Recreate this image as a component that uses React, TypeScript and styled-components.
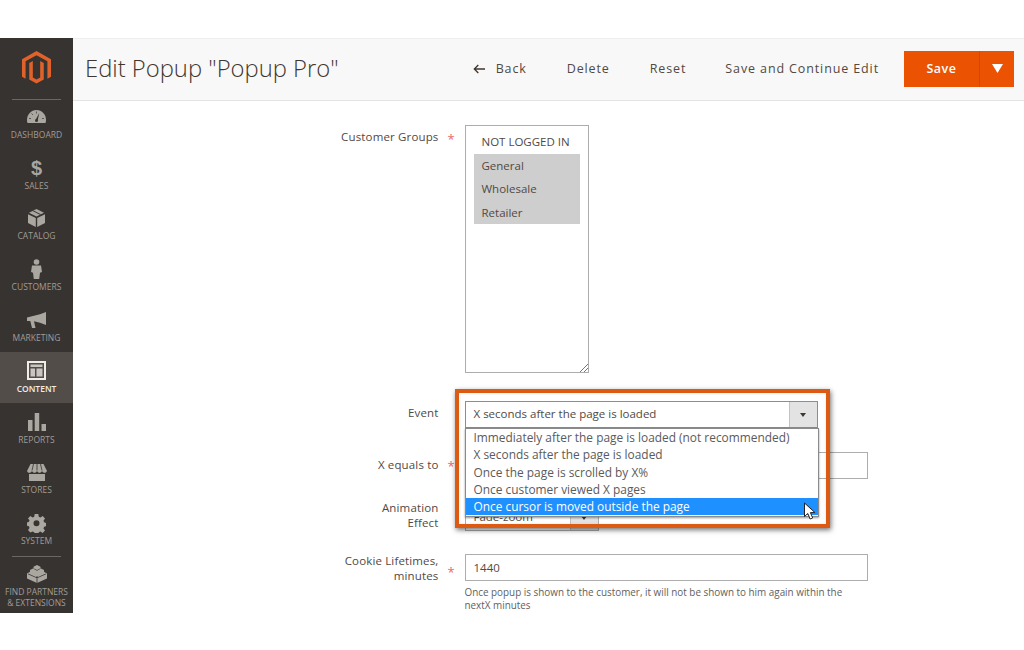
import React from "react";
import styled, { createGlobalStyle } from "styled-components";

const GlobalStyle = createGlobalStyle`
  html, body { margin: 0; padding: 0; background: #fff; }
  body { font-family: "Open Sans", "Noto Sans", sans-serif; color: #41362f; overflow: hidden; }
  * { box-sizing: border-box; }
`;

const NAV = [
  { key: "dashboard", label: "Dashboard" },
  { key: "sales", label: "Sales" },
  { key: "catalog", label: "Catalog" },
  { key: "customers", label: "Customers" },
  { key: "marketing", label: "Marketing" },
  { key: "content", label: "Content", active: true },
  { key: "reports", label: "Reports" },
  { key: "stores", label: "Stores" },
  { key: "system", label: "System" },
];

const OPTIONS = [
  "Immediately after the page is loaded (not recommended)",
  "X seconds after the page is loaded",
  "Once the page is scrolled by X%",
  "Once customer viewed X pages",
  "Once cursor is moved outside the page",
];

function NavIcon({ name }: { name: string }) {
  const c = "#aaa6a0";
  const bg = "#373330";
  switch (name) {
    case "dashboard":
      return (
        <svg width="19" height="13" viewBox="0 0 19 13">
          <path fill={c} d="M9.500 0C4 0 0 4.500 0 10c0 1 .2 2 .5 3h18c.3-1 .5-2 .5-3 0-5.500-4-10-9.500-10z" />
          <path fill={bg} d="M8.500 10 12.300 3l-1.700 7.800z" />
          <circle cx="9.500" cy="10.500" r="1.500" fill={bg} />
          <path stroke={bg} strokeWidth=".7" d="M9.500 1.500v2M4.500 3.500 6 5M2 8.500h2M15 8.500h2" />
        </svg>
      );
    case "sales":
      return <Dollar>$</Dollar>;
    case "catalog":
      return (
        <svg width="17" height="18" viewBox="0 0 17 18">
          <path fill={c} d="M8.500 0 16 3.700 8.500 7.500 1 3.700z" />
          <path fill={c} d="M0 5.200 7.800 9v9L0 14zM17 5.200 9.200 9v9l7.800-4z" />
          <path fill={bg} d="M4.500 2 12 5.800l1-.5L5.500 1.500z" />
        </svg>
      );
    case "customers":
      return (
        <svg width="11" height="20" viewBox="0 0 11 20">
          <circle cx="5.500" cy="3" r="2.800" fill={c} />
          <path fill={c} d="M1 6.500h9l1 6.500-2 .8-.8 6.200H2.800L2 13.800 0 13z" />
        </svg>
      );
    case "marketing":
      return (
        <svg width="20" height="16" viewBox="0 0 20 16">
          <path fill={c} d="M0 5.500 13 2.200 19 0v13l-6-2.200-6-1.500L8.500 16H5L3.300 9H0z" />
        </svg>
      );
    case "content":
      return (
        <svg width="19" height="19" viewBox="0 0 19 19">
          <path fill="#f0ece6" fillRule="evenodd" d="M0 0h19v19H0zM2 2v15h15V2z" />
          <path fill="#c9c5bf" d="M3.500 3.500h12v2.500h-12zM3.500 7.500h4.500v8h-4.500zM9.500 7.500h6v8h-6z" />
        </svg>
      );
    case "reports":
      return (
        <svg width="18" height="18" viewBox="0 0 18 18">
          <path fill={c} d="M0 7h4.500v11H0zM6.700 0h4.500v18H6.700zM13.500 11H18v7h-4.500z" />
        </svg>
      );
    case "stores":
      return (
        <svg width="20" height="17" viewBox="0 0 20 17">
          <path fill={c} d="M3.500 0h13L20 7c-.4 1.300-1.600 1.800-2.500 1.800S15.500 8.200 15 7c-.5 1.200-1.500 1.800-2.500 1.800S10.500 8.200 10 7c-.5 1.200-1.500 1.800-2.500 1.800S5.500 8.200 5 7c-.5 1.200-1.500 1.800-2.500 1.800S.4 8.300 0 7z" />
          <path stroke={bg} strokeWidth=".8" fill="none" d="M6.500 0 5 6.500M10 0v6.500M13.500 0 15 6.500" />
          <path fill={c} d="M2 10h16v7H2z" />
        </svg>
      );
    case "system":
      return (
        <svg width="19" height="19" viewBox="0 0 19 19">
          <path
            fill={c}
            fillRule="evenodd"
            d="M7.700 0h3.600l.5 2.700 1.600.7L15.700 2l2.300 2.500-1.500 2.200.6 1.600 1.900.6v3.300l-1.900.6-.6 1.600 1.500 2.200-2.300 2.400-2.300-1.500-1.600.7-.5 2.100H7.700l-.5-2.100-1.600-.7L3.300 18.500 1 16.100l1.500-2.200-.6-1.600L0 11.700V8.400l1.900-.6.600-1.600L1 4.500 3.300 2l2.300 1.400 1.600-.7zM9.500 6.300a3 3 0 1 0 0 6 3 3 0 0 0 0-6z"
          />
        </svg>
      );
    default:
      return null;
  }
}

export default function App() {
  return (
    <>
      <GlobalStyle />
      <Frame>
        <Sidebar>
          <LogoBox>
            <svg width="29" height="33" viewBox="0 0 30 35" preserveAspectRatio="none">
              <path fill="#e0622a" d="M15 0 30 8.700v18.600l-3.700 2.100V11L15 4.500 3.700 11v18.400L0 27.300V8.700z" />
              <path fill="#e0622a" d="M7.500 12.800l3.700-2.100V28l3.800 2.200 3.800-2.200V10.700l3.700 2.100v17.500L15 34.600l-7.500-4.300z" />
            </svg>
          </LogoBox>
          <NavList>
            {NAV.map((item) => (
              <NavItem key={item.key} $active={item.active}>
                <IconSlot>
                  <NavIcon name={item.key} />
                </IconSlot>
                <NavLabel $active={item.active}>{item.label}</NavLabel>
              </NavItem>
            ))}
          </NavList>
          <NavDivider />
          <PartnerItem>
            <svg width="20" height="18" viewBox="0 0 20 18">
              <path fill="#aaa6a0" d="M10 0l3.500 1.700v1.500L17 5v1.800L20 8.500v5L10 18 0 13.500v-5l3-1.700V5l3.500-1.800V1.700z" />
              <path fill="#373330" d="M9.600 11h.8v7h-.8zM1 8.500l9 4 9-4v.8l-9 4-9-4zM6.500 3.200 10 5l3.500-1.800v.6L10 5.700 6.500 3.800z" />
            </svg>
            <PartnerLabel>
              Find Partners
              <br />& Extensions
            </PartnerLabel>
          </PartnerItem>
        </Sidebar>

        <Main>
          <Header>
            <Title>Edit Popup "Popup Pro"</Title>
            <Actions>
              <ActionButton>
                <svg width="12" height="10" viewBox="0 0 12 10">
                  <path fill="none" stroke="#41362f" strokeWidth="1.300" d="M12 5H1.500M5.300 1 1.300 5l4 4" />
                </svg>
                Back
              </ActionButton>
              <ActionButton>Delete</ActionButton>
              <ActionButton>Reset</ActionButton>
              <ActionButton>Save and Continue Edit</ActionButton>
              <SaveGroup>
                <SaveButton>Save</SaveButton>
                <SaveCaret>
                  <svg width="11" height="9" viewBox="0 0 11 9">
                    <path fill="#fff" d="M0 0h11L5.500 9z" />
                  </svg>
                </SaveCaret>
              </SaveGroup>
            </Actions>
          </Header>

          <Form>
            <Row>
              <Label>Customer Groups</Label>
              <Star>*</Star>
              <MultiSelect>
                <MultiOption>NOT LOGGED IN</MultiOption>
                <MultiOption $selected>General</MultiOption>
                <MultiOption $selected>Wholesale</MultiOption>
                <MultiOption $selected>Retailer</MultiOption>
                <Resize width="9" height="9" viewBox="0 0 9 9">
                  <path stroke="#777" fill="none" d="M9 1 1 9M9 5 5 9" />
                </Resize>
              </MultiSelect>
            </Row>

            <EventRow>
              <Label>Event</Label>
              <Star $hidden>*</Star>
              <EventControl>
                <FocusSelect>
                  <SelectText>X seconds after the page is loaded</SelectText>
                  <SelectCaret>
                    <Caret />
                  </SelectCaret>
                </FocusSelect>
                <Dropdown>
                  {OPTIONS.map((o, i) => (
                    <DropdownOption key={o} $selected={i === OPTIONS.length - 1}>
                      {o}
                    </DropdownOption>
                  ))}
                  <Cursor width="15" height="19" viewBox="0 0 15 19">
                    <path fill="#fff" stroke="#222" strokeWidth="1" d="M1.500 1v13.500l3.300-3 2.300 5.500 2.600-1.100-2.300-5.300H12z" />
                  </Cursor>
                </Dropdown>
                <Highlight />
              </EventControl>
            </EventRow>

            <XRow>
              <XLabel>X equals to</XLabel>
              <Star>*</Star>
              <Input />
            </XRow>

            <AnimationRow>
              <RaisedLabel>
                Animation
                <br />
                Effect
              </RaisedLabel>
              <Star $hidden>*</Star>
              <EffectSelect>
                <SelectText>Fade-zoom</SelectText>
                <SelectCaret>
                  <Caret />
                </SelectCaret>
              </EffectSelect>
            </AnimationRow>

            <CookieRow>
              <CookieLabel>
                Cookie Lifetimes,
                <br />
                minutes
              </CookieLabel>
              <CookieStar>*</CookieStar>
              <div>
                <Input>1440</Input>
                <Note>
                  Once popup is shown to the customer, it will not be shown to him again within the
                  <br />
                  nextX minutes
                </Note>
              </div>
            </CookieRow>
          </Form>
        </Main>
      </Frame>
    </>
  );
}

const Frame = styled.div`
  display: flex;
  width: 1024px;
  height: 575px;
  margin-top: 38px;
`;

const Sidebar = styled.aside`
  width: 73px;
  flex: none;
  background: #373330;
  display: flex;
  flex-direction: column;
`;
const LogoBox = styled.div`
  height: 62px;
  flex: none;
  display: flex;
  align-items: flex-start;
  justify-content: center;
  padding-top: 13px;
  border-bottom: 1px solid #6b6763;
  margin: 0 12px;
`;
const NavList = styled.nav`
  display: flex;
  flex-direction: column;
  margin-top: -2px;
`;
const NavItem = styled.div<{ $active?: boolean }>`
  height: 50.800px;
  display: flex;
  flex-direction: column;
  align-items: center;
  justify-content: flex-end;
  padding-bottom: 8px;
  background: ${({ $active }) => ($active ? "#524d49" : "transparent")};
`;
const IconSlot = styled.div`
  height: 24px;
  display: flex;
  align-items: center;
  justify-content: center;
`;
const NavLabel = styled.div<{ $active?: boolean }>`
  font-size: 8.500px;
  line-height: 12px;
  text-transform: uppercase;
  color: ${({ $active }) => ($active ? "#f0ece6" : "#a09c96")};
  font-weight: ${({ $active }) => ($active ? 600 : 400)};
`;
const Dollar = styled.span`
  font-family: "Liberation Sans", sans-serif;
  font-size: 20px;
  font-weight: 700;
  line-height: 20px;
  color: #aaa6a0;
`;
const NavDivider = styled.div`
  height: 1px;
  flex: none;
  background: #6b6763;
  margin: 1px 12px 0;
`;
const PartnerItem = styled.div`
  display: flex;
  flex-direction: column;
  align-items: center;
  padding-top: 8px;
`;
const PartnerLabel = styled.div`
  font-size: 8.500px;
  line-height: 11px;
  margin-top: 3px;
  text-align: center;
  text-transform: uppercase;
  color: #a09c96;
  white-space: nowrap;
`;

const Main = styled.main`
  flex: 1;
  min-width: 0;
`;
const Header = styled.header`
  height: 63px;
  background: #f8f8f8;
  border-top: 1px solid #eeeeee;
  border-bottom: 1px solid #e3e3e3;
  display: flex;
  align-items: center;
  justify-content: space-between;
  padding: 0 10px 3px 12px;
`;
const Title = styled.h1`
  margin: 0 0 1px;
  font-size: 23.800px;
  font-weight: 300;
  color: #41362f;
`;
const Actions = styled.div`
  display: flex;
  align-items: center;
  margin-bottom: -1px;
`;
const ActionButton = styled.button`
  border: 0;
  background: none;
  padding: 0;
  margin-right: 40px;
  font: 500 12.500px "Open Sans", sans-serif;
  letter-spacing: 0.880px;
  color: #514943;
  display: flex;
  align-items: center;
  gap: 11px;
  &:nth-child(3) { margin-right: 39px; }
  &:nth-child(4) { margin-right: 25px; }
`;
const SaveGroup = styled.div`
  display: flex;
  height: 36px;
  background: #eb5202;
`;
const SaveButton = styled.button`
  width: 76px;
  border: 0;
  background: none;
  padding: 0;
  font: 600 12.500px "Open Sans", sans-serif;
  letter-spacing: 0.500px;
  color: #fff;
  border-right: 1px solid #d24a02;
`;
const SaveCaret = styled.div`
  width: 34px;
  display: flex;
  align-items: center;
  justify-content: center;
`;

const Form = styled.div`
  padding-top: 23.500px;
  font-size: 12px;
`;
const Row = styled.div`
  display: flex;
  align-items: flex-start;
`;
const EventRow = styled(Row)`
  margin-top: 28.500px;
`;
const XRow = styled(Row)`
  margin-top: 24px;
`;
const AnimationRow = styled(Row)`
  margin-top: 25px;
`;
const CookieRow = styled(Row)`
  margin-top: 23px;
`;
const Label = styled.div`
  width: 365.500px;
  text-align: right;
  font-size: 11.500px;
  font-weight: 500;
  letter-spacing: 0.150px;
  line-height: 14.500px;
  padding-top: 5px;
  color: #514943;
`;
const XLabel = styled(Label)`
  padding-top: 6px;
`;
const RaisedLabel = styled(Label)`
  margin-top: -3px;
  padding-top: 0;
`;
const CookieLabel = styled(Label)`
  padding-top: 0;
`;
const Star = styled.div<{ $hidden?: boolean }>`
  width: 26px;
  padding: 6px 0 0 9px;
  color: #e22626;
  opacity: 0.7;
  font-size: 13px;
  line-height: 16px;
  visibility: ${({ $hidden }) => ($hidden ? "hidden" : "visible")};
`;
const CookieStar = styled(Star)`
  padding-top: 10px;
`;
const MultiSelect = styled.div`
  position: relative;
  width: 124px;
  height: 248px;
  border: 1px solid #adadad;
  padding: 4.500px 9px;
`;
const MultiOption = styled.div<{ $selected?: boolean }>`
  height: 23.600px;
  line-height: 23.600px;
  padding-left: 8px;
  margin: 0 -1px;
  font-size: 11.500px;
  color: #514943;
  background: ${({ $selected }) => ($selected ? "#cecece" : "transparent")};
`;
const Resize = styled.svg`
  position: absolute;
  right: 0;
  bottom: 0;
`;
const EventControl = styled.div`
  position: relative;
  width: 353px;
`;
const SelectBase = styled.div`
  height: 27px;
  display: flex;
  align-items: stretch;
  background: #fff;
  font-size: 11.500px;
  color: #514943;
`;
const FocusSelect = styled(SelectBase)`
  border: 1px solid #4a9fe0;
`;
const EffectSelect = styled(SelectBase)`
  width: 134px;
  border: 1px solid #adadad;
`;
const SelectText = styled.div`
  flex: 1;
  padding-left: 8px;
  line-height: 23px;
  white-space: nowrap;
`;
const SelectCaret = styled.div`
  width: 28px;
  background: #e3e3e3;
  border-left: 1px solid #c2c2c2;
  display: flex;
  align-items: center;
  justify-content: center;
`;
const Caret = styled.span`
  width: 0;
  height: 0;
  border-left: 3.500px solid transparent;
  border-right: 3.500px solid transparent;
  border-top: 4px solid #41362f;
`;
const Dropdown = styled.div`
  position: absolute;
  z-index: 3;
  top: 27px;
  left: 0;
  right: -1px;
  height: 89px;
  background: #fff;
  border: 1px solid #8a8a8a;
  box-shadow: 0 1px 2px rgba(0, 0, 0, 0.4);
  font-size: 11.900px;
`;
const DropdownOption = styled.div<{ $selected?: boolean }>`
  height: 17.300px;
  line-height: 17.300px;
  padding-left: 8px;
  white-space: nowrap;
  color: ${({ $selected }) => ($selected ? "#fff" : "#5b5b5b")};
  background: ${({ $selected }) => ($selected ? "#1e90ff" : "transparent")};
`;
const Cursor = styled.svg`
  position: absolute;
  right: 0;
  bottom: -5px;
`;
const Highlight = styled.div`
  position: absolute;
  z-index: 4;
  left: -10px;
  right: -12px;
  top: -12px;
  height: 139px;
  border: 4px solid #dd5a12;
  box-shadow: 1px 2px 5px rgba(0, 0, 0, 0.55), inset 0 0 3px rgba(0, 0, 0, 0.1);
  pointer-events: none;
`;
const Input = styled.div`
  width: 403px;
  height: 27px;
  border: 1px solid #adadad;
  padding-left: 8px;
  line-height: 25px;
  font-size: 11.500px;
  color: #514943;
`;
const Note = styled.div`
  margin-top: 5px;
  font-size: 9.900px;
  line-height: 13px;
  color: #5f5f5f;
`;
